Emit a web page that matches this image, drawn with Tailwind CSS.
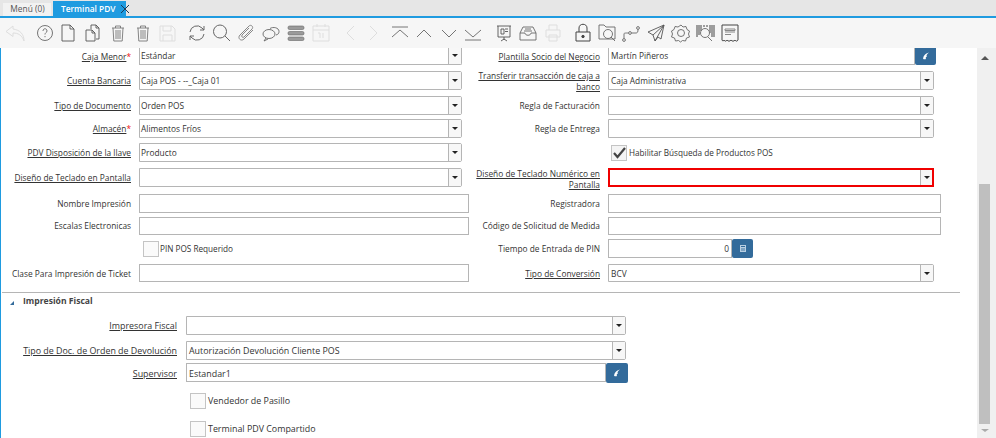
<!DOCTYPE html>
<html>
<head>
<meta charset="utf-8">
<script src="https://cdn.jsdelivr.net/npm/@tailwindcss/browser@4"></script>
</head>
<body class="w-[996px] h-[438px] overflow-hidden bg-white font-['Open_Sans',sans-serif] text-[8.35px] text-[#333]">
<div class="flex flex-col h-[438px]">
  <!-- tabs -->
  <div class="flex h-[18px] shrink-0 items-stretch bg-[#e6e6e6] border-b-2 border-[#1f9be0] pl-[3px]">
    <div class="w-[48px] h-[13px] mt-[3px] pl-[1px] bg-[#f2f2f2] text-center text-[#555] leading-[12px]">Menú (0)</div>
    <div class="flex w-[73px] h-[15px] mt-[1px] ml-[2px] bg-[#1f9be0] text-white font-semibold leading-[15px] pl-[8px] whitespace-nowrap">Terminal PDV
      <svg class="w-[10px] h-[10px] ml-[4px] mt-[3px] shrink-0" viewBox="0 0 10 10" fill="none" stroke="#1b3a55" stroke-width="1"><path d="M1 1l8 8M9 1l-8 8"/></svg>
    </div>
  </div>
  <!-- toolbar -->
  <div class="flex h-[30px] shrink-0 items-center bg-[#f6f6f6] pl-[3px]">
    <svg class="w-6 h-6" viewBox="0 0 24 24" fill="none" stroke="#dedede" stroke-width="1"><path d="M10 5L3 10.500l7 5v-3.500c5 0 9 2 11 8 0-7-4-11-11-12z"/></svg>
    <svg class="w-6 h-6 ml-[6px]" viewBox="0 0 24 24" fill="none" stroke="#666" stroke-width=".9"><circle cx="12" cy="12" r="7.500"/><path d="M10 10c0-3 4-3 4 0 0 1.500-2 1.500-2 3.500M12 15v1.200"/></svg>
    <svg class="w-6 h-6 ml-[-1px]" viewBox="0 0 24 24" fill="none" stroke="#555" stroke-width=".9"><path d="M6 4h8l4 4v12H6zM14 4v4h4"/></svg>
    <svg class="w-6 h-6 ml-[1px]" viewBox="0 0 24 24" fill="none" stroke="#555" stroke-width=".9"><path d="M10 8V4h5l3 3v11h-3M15 4v3h3M5 9h6l3 3v8H5zM11 9v3h3"/></svg>
    <svg class="w-6 h-6 ml-[1px]" viewBox="0 0 24 24" fill="none" stroke="#777" stroke-width=".9"><path d="M6 7h12M9.500 7V5h5v2M7 7l.800 13h8.400L17 7M10 9v9M12 9v9M14 9v9"/></svg>
    <svg class="w-6 h-6 ml-[1px]" viewBox="0 0 24 24" fill="none" stroke="#777" stroke-width=".9"><path d="M6 7h12M9.500 7V5h5v2M7 7l.800 13h8.400L17 7M10 9v9M12 9v9M14 9v9"/></svg>
    <svg class="w-6 h-6" viewBox="0 0 24 24" fill="none" stroke="#dedede" stroke-width="1"><path d="M5 5h12l3 3v12H5zM8 5v5h8V5M8 20v-6h9v6"/></svg>
    <svg class="w-6 h-6 ml-[6px]" viewBox="0 0 24 24" fill="none" stroke="#666" stroke-width="1"><path d="M5 11a7 7 0 0 1 12-4l2 2M19 5v4h-4M19 13a7 7 0 0 1-12 4l-2-2M5 19v-4h4"/></svg>
    <svg class="w-6 h-6" viewBox="0 0 24 24" fill="none" stroke="#666" stroke-width="1"><circle cx="11" cy="10.500" r="6.500"/><path d="M16 15l5 5"/></svg>
    <svg class="w-6 h-6 ml-[1px]" viewBox="0 0 24 24" fill="none" stroke="#888" stroke-width="1"><path d="M19 9l-9 9c-3 3-7-1-4-4L15 5c2-2 5 1 3 3l-8 8c-1 1-3 0-2-2l7-7"/></svg>
    <svg class="w-6 h-6 ml-[1px]" viewBox="0 0 24 24" fill="none" stroke="#666" stroke-width=".9"><ellipse cx="10" cy="13" rx="6" ry="4.500"/><path d="M7 17l-2 3 4-2M11 7.500c3-2 9-1 9 3 0 2-1 3-3 3.500"/></svg>
    <svg class="w-6 h-6 ml-[1px]" viewBox="0 0 24 24" fill="#9a9a9a" stroke="#666" stroke-width=".6"><rect x="4" y="5" width="16" height="3.500" rx="1.500"/><rect x="4" y="10.500" width="16" height="3.500" rx="1.500"/><rect x="4" y="16" width="16" height="3.500" rx="1.500"/></svg>
    <svg class="w-6 h-6 ml-[1px]" viewBox="0 0 24 24" fill="none" stroke="#dedede" stroke-width="1"><path d="M4 5h16v15H4zM4 9h16M8 3v3M16 3v3M9 12h2v5M14 12v5"/></svg>
    <svg class="w-6 h-6 ml-[6px]" viewBox="0 0 24 24" fill="none" stroke="#dedede" stroke-width="1"><path d="M15 5l-7 7 7 7"/></svg>
    <svg class="w-6 h-6 ml-[-2px]" viewBox="0 0 24 24" fill="none" stroke="#dedede" stroke-width="1"><path d="M9 5l7 7-7 7"/></svg>
    <svg class="w-6 h-6 ml-[3px]" viewBox="0 0 24 24" fill="none" stroke="#666" stroke-width=".9"><path d="M4 6h16M4 16l8-7 8 7"/></svg>
    <svg class="w-6 h-6" viewBox="0 0 24 24" fill="none" stroke="#666" stroke-width=".9"><path d="M5 16l7-7 7 7"/></svg>
    <svg class="w-6 h-6 ml-[1px]" viewBox="0 0 24 24" fill="none" stroke="#666" stroke-width=".9"><path d="M5 9l7 7 7-7"/></svg>
    <svg class="w-6 h-6" viewBox="0 0 24 24" fill="none" stroke="#666" stroke-width=".9"><path d="M4 9l8 7 8-7M4 19h16"/></svg>
    <svg class="w-6 h-6 ml-[7px]" viewBox="0 0 24 24" fill="none" stroke="#555" stroke-width=".9"><path d="M5 5h14M6 5v11h12V5M9 8h3v5H9zM13 8h3M13 10.500h3M12 16v3M9 20l3-2 3 2"/></svg>
    <svg class="w-6 h-6" viewBox="0 0 24 24" fill="none" stroke="#666" stroke-width=".9"><path d="M7 6h10l3 6v7H4v-7zM4 12h5c0 3 6 3 6 0h5M9 8h6M8 10h8"/></svg>
    <svg class="w-6 h-6 ml-[1px]" viewBox="0 0 24 24" fill="none" stroke="#dedede" stroke-width="1"><path d="M8 9V4h8v5M5 9h14v7H5zM8 14h8v6H8z"/></svg>
    <svg class="w-6 h-6 ml-[6px]" viewBox="0 0 24 24" fill="none" stroke="#444" stroke-width="1"><path d="M5 11h14v9H5zM8 11V7c0-5 8-5 8 0v4"/><circle cx="12" cy="15.500" r="1.200" fill="#444"/></svg>
    <svg class="w-6 h-6" viewBox="0 0 24 24" fill="none" stroke="#666" stroke-width=".9"><path d="M4 4h5l2 2h9v12H4z"/><circle cx="13" cy="13" r="4.500"/><path d="M16 16l4 4"/></svg>
    <svg class="w-6 h-6" viewBox="0 0 24 24" fill="none" stroke="#666" stroke-width=".9"><circle cx="5" cy="19" r="1.400"/><circle cx="11" cy="12" r="1.400"/><circle cx="19" cy="7" r="1.400"/><path d="M5 17.500V13c0-1 1-1 4.500-1M12.500 12H17c1.500 0 2-1 2-3.500"/></svg>
    <svg class="w-6 h-6 ml-[1px]" viewBox="0 0 24 24" fill="none" stroke="#555" stroke-width=".9"><path d="M20 4L4 11l5 3 2 6 3-4 3 2zM20 4L9 14M20 4l-9 16"/></svg>
    <svg class="w-6 h-6 ml-[1px]" viewBox="0 0 24 24" fill="none" stroke="#666" stroke-width=".9"><path d="M12 4l2 2 3-.5 1 3 2.500 1.500-1 3 1 3-3 1-1 3-3-.5-2 1.500-2-1.500-3 .5-1-3-3-1 1-3-1-3 2.500-1.500 1-3 3 .5z"/><circle cx="12" cy="12" r="3.500"/></svg>
    <svg class="w-6 h-6" viewBox="0 0 24 24" fill="none" stroke="#444" stroke-width="1"><path d="M4 4v12M6 4v10M8 4v6M17 4v8M19 4v12M21 4v12M11 4v2M14 4v2"/><circle cx="12" cy="12" r="4.500" stroke="#777"/><path d="M15 16l4 4" stroke="#777"/></svg>
    <svg class="w-6 h-6 ml-[1px]" viewBox="0 0 24 24" fill="none" stroke="#444" stroke-width="1"><path d="M4 4h16v15c-1 1.500-2 1.500-3 0-1 1.500-3 1.500-4 0-1 1.500-3 1.500-4 0-1 1.500-2 1.500-3 0-1 1.500-1 1.500-2 0z"/><path d="M7 8h10v1.500H7zM7 11h10M7 13.500h6" stroke="#888"/></svg>
  </div>
  <!-- body -->
  <div class="flex flex-1 min-h-0">
    <div class="w-[977px] shrink-0 overflow-hidden border-l border-[#1f9be0]">
      <div class="ml-[-1px] mt-[-2px]">
        <!-- row 1 -->
        <div class="flex h-[19px]">
          <div class="flex w-[469px]">
            <div class="w-[131px] text-right leading-[21px]"><span class="underline">Caja Menor</span><span class="text-[#e11]">*</span></div>
            <div class="flex flex-1 ml-2 mr-[7px] h-[19px] border border-t-0 border-[#b5b5b5] rounded-br-[2px]"><div class="flex-1 px-[2px] ml-[-1px] leading-[20px]">Estándar</div><div class="w-[13px] border-l border-[#b5b5b5] bg-[#f7f7f7] flex items-center justify-center"><div class="w-0 h-0 border-x-[3px] border-x-transparent border-t-[3px] border-t-[#222]"></div></div></div>
          </div>
          <div class="flex w-[472px]">
            <div class="w-[131px] text-right leading-[21px]"><span class="underline">Plantilla Socio del Negocio</span></div>
            <div class="flex ml-2 w-[307px] h-[19px] border border-t-0 border-[#b5b5b5] px-[2px] leading-[20px]">Martín Piñeros</div>
            <div class="w-[21px] h-[19px] bg-[#336b9b] rounded-b-[2px] flex items-center justify-center"><svg class="w-[8px] h-[8px]" viewBox="0 0 8 8" fill="#fff"><path d="M7 .5C4 1 1.500 3 1 6.500 1.500 7.500 3 7.500 4 7 3.500 6 3.500 5 5 4.500 4 4 4.500 2 7 .5z"/></svg></div>
          </div>
        </div>
        <!-- row 2 -->
        <div class="flex h-[19px] mt-[6px]">
          <div class="flex w-[469px]">
            <div class="w-[131px] text-right leading-[19px]"><span class="underline">Cuenta Bancaria</span></div>
            <div class="flex flex-1 ml-2 mr-[7px] border border-[#b5b5b5] rounded-r-[2px]"><div class="flex-1 px-[2px] ml-[-1px] leading-[17px]">Caja POS - --_Caja 01</div><div class="w-[13px] border-l border-[#b5b5b5] bg-[#f7f7f7] flex items-center justify-center"><div class="w-0 h-0 border-x-[3px] border-x-transparent border-t-[3px] border-t-[#222]"></div></div></div>
          </div>
          <div class="flex w-[465px]">
            <div class="w-[131px] text-right leading-[11px] pl-[5px] mt-[-1px]"><span class="underline">Transferir transacción de caja a banco</span></div>
            <div class="flex flex-1 ml-2 border border-[#b5b5b5] rounded-r-[2px]"><div class="flex-1 px-[2px] leading-[17px]">Caja Administrativa</div><div class="w-[13px] border-l border-[#b5b5b5] bg-[#f7f7f7] flex items-center justify-center"><div class="w-0 h-0 border-x-[3px] border-x-transparent border-t-[3px] border-t-[#222]"></div></div></div>
          </div>
        </div>
        <!-- row 3 -->
        <div class="flex h-[19px] mt-[6px]">
          <div class="flex w-[469px]">
            <div class="w-[131px] text-right leading-[19px]"><span class="underline">Tipo de Documento</span></div>
            <div class="flex flex-1 ml-2 mr-[7px] border border-[#b5b5b5] rounded-r-[2px]"><div class="flex-1 px-[2px] ml-[-1px] leading-[17px]">Orden POS</div><div class="w-[13px] border-l border-[#b5b5b5] bg-[#f7f7f7] flex items-center justify-center"><div class="w-0 h-0 border-x-[3px] border-x-transparent border-t-[3px] border-t-[#222]"></div></div></div>
          </div>
          <div class="flex w-[465px]">
            <div class="w-[131px] text-right leading-[19px]">Regla de Facturación</div>
            <div class="flex flex-1 ml-2 border border-[#b5b5b5] rounded-r-[2px]"><div class="flex-1"></div><div class="w-[13px] border-l border-[#b5b5b5] bg-[#f7f7f7] flex items-center justify-center"><div class="w-0 h-0 border-x-[3px] border-x-transparent border-t-[3px] border-t-[#222]"></div></div></div>
          </div>
        </div>
        <!-- row 4 -->
        <div class="flex h-[19px] mt-[4px]">
          <div class="flex w-[469px]">
            <div class="w-[131px] text-right leading-[19px]"><span class="underline">Almacén</span><span class="text-[#e11]">*</span></div>
            <div class="flex flex-1 ml-2 mr-[7px] border border-[#b5b5b5] rounded-r-[2px]"><div class="flex-1 px-[2px] ml-[-1px] leading-[17px]">Alimentos Fríos</div><div class="w-[13px] border-l border-[#b5b5b5] bg-[#f7f7f7] flex items-center justify-center"><div class="w-0 h-0 border-x-[3px] border-x-transparent border-t-[3px] border-t-[#222]"></div></div></div>
          </div>
          <div class="flex w-[465px]">
            <div class="w-[131px] text-right leading-[19px]">Regla de Entrega</div>
            <div class="flex flex-1 ml-2 border border-[#b5b5b5] rounded-r-[2px]"><div class="flex-1"></div><div class="w-[13px] border-l border-[#b5b5b5] bg-[#f7f7f7] flex items-center justify-center"><div class="w-0 h-0 border-x-[3px] border-x-transparent border-t-[3px] border-t-[#222]"></div></div></div>
          </div>
        </div>
        <!-- row 5 -->
        <div class="flex h-[19px] mt-[5px]">
          <div class="flex w-[469px]">
            <div class="w-[131px] text-right leading-[19px]"><span class="underline">PDV Disposición de la llave</span></div>
            <div class="flex flex-1 ml-2 mr-[7px] border border-[#b5b5b5] rounded-r-[2px]"><div class="flex-1 px-[2px] ml-[-1px] leading-[17px]">Producto</div><div class="w-[13px] border-l border-[#b5b5b5] bg-[#f7f7f7] flex items-center justify-center"><div class="w-0 h-0 border-x-[3px] border-x-transparent border-t-[3px] border-t-[#222]"></div></div></div>
          </div>
          <div class="flex items-center ml-[142px]">
            <div class="w-[16px] h-[16px] border border-[#c4c4c4] bg-[#f4f4f4] flex items-center justify-center"><svg class="w-[14px] h-[14px]" viewBox="0 0 14 14" fill="none" stroke="#444" stroke-width="2.200"><path d="M2 7l3.500 4L13 2"/></svg></div>
            <span class="ml-[2px] text-[8.2px] leading-[21px]">Habilitar Búsqueda de Productos POS</span>
          </div>
        </div>
        <!-- row 6 -->
        <div class="flex h-[19px] mt-[6px]">
          <div class="flex w-[469px]">
            <div class="w-[131px] text-right leading-[19px]"><span class="underline">Diseño de Teclado en Pantalla</span></div>
            <div class="flex flex-1 ml-2 mr-[7px] border border-[#b5b5b5] rounded-r-[2px]"><div class="flex-1"></div><div class="w-[13px] border-l border-[#b5b5b5] bg-[#f7f7f7] flex items-center justify-center"><div class="w-0 h-0 border-x-[3px] border-x-transparent border-t-[3px] border-t-[#222]"></div></div></div>
          </div>
          <div class="flex w-[465px]">
            <div class="w-[131px] text-right leading-[11px] pl-[5px]"><span class="underline">Diseño de Teclado Numérico en Pantalla</span></div>
            <div class="flex flex-1 ml-2 border-2 border-[#f00000]"><div class="flex-1"></div><div class="w-[12px] border-l border-[#b5b5b5] bg-[#f7f7f7] flex items-center justify-center"><div class="w-0 h-0 border-x-[3px] border-x-transparent border-t-[3px] border-t-[#222]"></div></div></div>
          </div>
        </div>
        <!-- row 7 -->
        <div class="flex h-[19px] mt-[7px]">
          <div class="flex w-[469px]">
            <div class="w-[131px] text-right leading-[19px]">Nombre Impresión</div>
            <div class="flex-1 ml-2 border border-[#b5b5b5]"></div>
          </div>
          <div class="flex w-[472px]">
            <div class="w-[131px] text-right leading-[19px]">Registradora</div>
            <div class="flex-1 ml-2 border border-[#b5b5b5]"></div>
          </div>
        </div>
        <!-- row 8 -->
        <div class="flex h-[18px] mt-[4px]">
          <div class="flex w-[469px]">
            <div class="w-[131px] text-right leading-[18px]">Escalas Electronicas</div>
            <div class="flex-1 ml-2 border border-[#b5b5b5]"></div>
          </div>
          <div class="flex w-[472px]">
            <div class="w-[131px] text-right leading-[18px]">Código de Solicitud de Medida</div>
            <div class="flex-1 ml-2 border border-[#b5b5b5]"></div>
          </div>
        </div>
        <!-- row 9 -->
        <div class="flex h-[19px] mt-[4px]">
          <div class="flex items-center w-[469px] pl-[143px]">
            <div class="w-[16px] h-[16px] border border-[#c4c4c4] bg-[#fafafa]"></div>
            <span class="ml-[1px] text-[8.2px] leading-[21px]">PIN POS Requerido</span>
          </div>
          <div class="flex">
            <div class="w-[131px] text-right leading-[19px]">Tiempo de Entrada de PIN</div>
            <div class="w-[124px] ml-2 border border-[#b5b5b5] text-right pr-[2px] leading-[17px]">0</div>
            <div class="w-[21px] bg-[#336b9b] rounded-[2px] flex items-center justify-center"><svg class="w-[6px] h-[7px]" viewBox="0 0 6 7"><rect width="6" height="7" fill="#b9cfe2"/><rect x="1" y="1" width="4" height="1" fill="#336b9b"/><rect x="1" y="3" width="4" height="3" fill="#7fa3c2"/></svg></div>
          </div>
        </div>
        <!-- row 10 -->
        <div class="flex h-[18px] mt-[6px]">
          <div class="flex w-[469px]">
            <div class="w-[131px] text-right leading-[20px]">Clase Para Impresión de Ticket</div>
            <div class="flex-1 ml-2 border border-[#b5b5b5]"></div>
          </div>
          <div class="flex w-[465px]">
            <div class="w-[131px] text-right leading-[20px]"><span class="underline">Tipo de Conversión</span></div>
            <div class="flex flex-1 ml-2 border border-[#b5b5b5] rounded-r-[2px]"><div class="flex-1 px-[2px] leading-[18px]">BCV</div><div class="w-[13px] border-l border-[#b5b5b5] bg-[#f7f7f7] flex items-center justify-center"><div class="w-0 h-0 border-x-[3px] border-x-transparent border-t-[3px] border-t-[#222]"></div></div></div>
          </div>
        </div>
        <!-- section -->
        <div class="ml-[2px] w-[958px] h-[1px] mt-[10px] bg-[#b5b5b5]"></div>
        <div class="flex items-center h-[14px] mt-[1px]">
          <div class="ml-[10px] mt-[3px] w-0 h-0 border-l-[4px] border-l-transparent border-b-[4px] border-b-[#336b9b]"></div>
          <span class="ml-[9px] font-bold text-[8.6px] text-[#444]">Impresión Fiscal</span>
        </div>
        <!-- lower rows -->
        <div class="text-[8.9px]">
        <div class="flex h-[19px] mt-[8px]">
          <div class="w-[177px] text-right leading-[19px]"><span class="underline">Impresora Fiscal</span></div>
          <div class="flex w-[440px] ml-[9px] border border-[#b5b5b5] rounded-r-[2px]"><div class="flex-1"></div><div class="w-[13px] border-l border-[#b5b5b5] bg-[#f7f7f7] flex items-center justify-center"><div class="w-0 h-0 border-x-[3px] border-x-transparent border-t-[3px] border-t-[#222]"></div></div></div>
        </div>
        <div class="flex h-[19px] mt-[6px]">
          <div class="w-[177px] text-right leading-[19px]"><span class="underline">Tipo de Doc. de Orden de Devolución</span></div>
          <div class="flex w-[440px] ml-[9px] border border-[#b5b5b5] rounded-r-[2px]"><div class="flex-1 px-[2px] leading-[17px]">Autorización Devolución Cliente POS</div><div class="w-[13px] border-l border-[#b5b5b5] bg-[#f7f7f7] flex items-center justify-center"><div class="w-0 h-0 border-x-[3px] border-x-transparent border-t-[3px] border-t-[#222]"></div></div></div>
        </div>
        <div class="flex h-[20px] mt-[3px]">
          <div class="w-[177px] text-right leading-[21px]"><span class="underline">Supervisor</span></div>
          <div class="w-[420px] h-[19px] ml-[9px] border border-[#b5b5b5] px-[2px] leading-[19px]">Estandar1</div>
          <div class="w-[22px] bg-[#336b9b] rounded-[2px] flex items-center justify-center"><svg class="w-[8px] h-[8px]" viewBox="0 0 8 8" fill="#fff"><path d="M7 .5C4 1 1.500 3 1 6.500 1.500 7.500 3 7.500 4 7 3.500 6 3.500 5 5 4.500 4 4 4.500 2 7 .5z"/></svg></div>
        </div>
        <div class="flex items-center h-[16px] mt-[10px] pl-[190px]">
          <div class="w-[16px] h-[16px] border border-[#c4c4c4] bg-[#fafafa]"></div>
          <span class="ml-[2px]">Vendedor de Pasillo</span>
        </div>
        <div class="flex items-center h-[16px] mt-[12px] pl-[190px]">
          <div class="w-[16px] h-[16px] border border-[#c4c4c4] bg-[#fafafa]"></div>
          <span class="ml-[2px]">Terminal PDV Compartido</span>
        </div>
        </div>
      </div>
    </div>
    <!-- scrollbar -->
    <div class="w-[19px] shrink-0 bg-[#f0f0f0] flex flex-col">
      <div class="h-[136px] pl-[4px] pt-[8px]"><div class="w-0 h-0 border-x-[4px] border-x-transparent border-b-[4px] border-b-[#555]"></div></div>
      <div class="w-[11px] h-[240px] ml-[2px] bg-[#bfbfbf]"></div>
      <div class="pl-[4px] pt-[5px]"><div class="w-0 h-0 border-x-[4px] border-x-transparent border-t-[3px] border-t-[#aaa]"></div></div>
    </div>
  </div>
</div>
</body>
</html>
